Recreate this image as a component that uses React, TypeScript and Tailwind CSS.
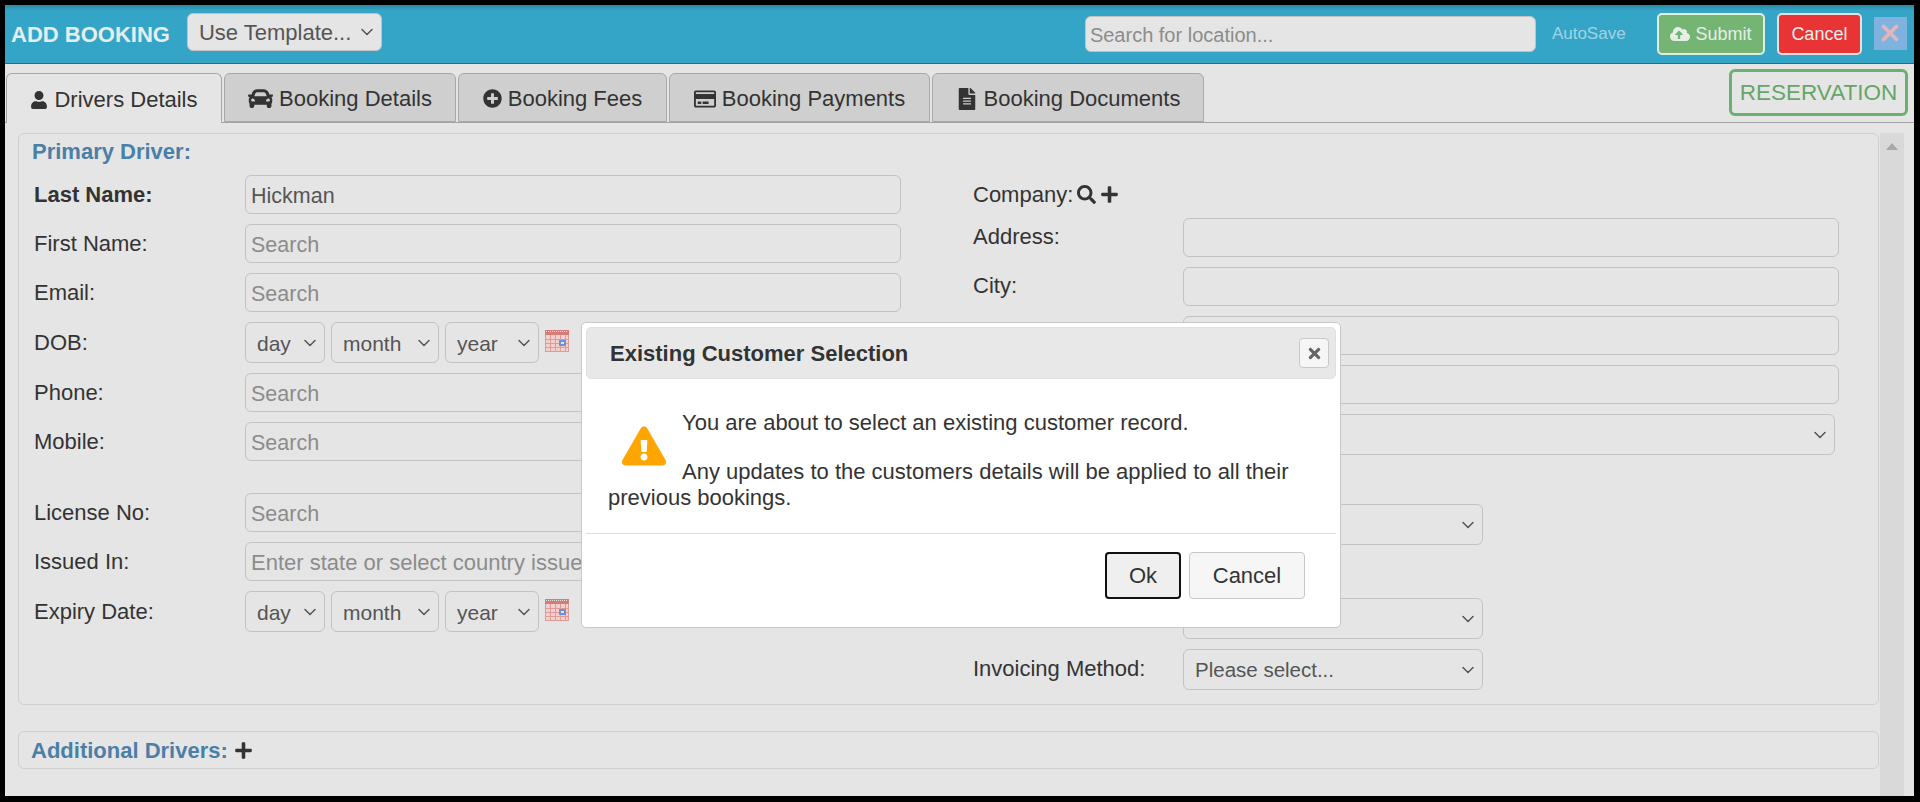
import { ReactNode } from "react";
import { ChevronDown, X } from "lucide-react";
import {
  FaCar,
  FaCloudUploadAlt,
  FaExclamationTriangle,
  FaFileAlt,
  FaPlus,
  FaPlusCircle,
  FaRegCreditCard,
  FaSearch,
  FaTimes,
  FaUser,
} from "react-icons/fa";

const tabs: { label: string; icon: ReactNode; width: string }[] = [
  { label: "Drivers Details", icon: <FaUser className="text-[18px]" />, width: "w-[216px]" },
  { label: "Booking Details", icon: <FaCar className="text-[25px]" />, width: "w-[232px]" },
  { label: "Booking Fees", icon: <FaPlusCircle className="text-[19px]" />, width: "w-[209px]" },
  { label: "Booking Payments", icon: <FaRegCreditCard className="text-[22px]" />, width: "w-[261px]" },
  { label: "Booking Documents", icon: <FaFileAlt className="text-[22px]" />, width: "w-[272px]" },
];

function CalendarIcon() {
  return (
    <svg width="24" height="22" viewBox="0 0 24 22" className="mb-[4px] ml-1.5 shrink-0">
      <rect x="0" y="0" width="24" height="22" fill="#f2d0ce" />
      <rect x="0" y="0" width="24" height="5" fill="#d67c78" />
      <path d="M1 1.5h22" stroke="#eddcdc" strokeWidth="1" strokeDasharray="1 1" />
      <path d="M0 9.5h24M0 13.5h24M0 17.5h24M5.5 5v17M10.5 5v17M15.5 5v17M20.5 5v17M.5 5v17M23.5 5v17M0 21.5h24" stroke="#dd9c98" strokeWidth="1" />
      <rect x="14" y="10" width="7" height="6" fill="#6f8fd6" />
      <rect x="16" y="12" width="3" height="2" fill="#dfe6f5" />
    </svg>
  );
}

function Label({ children, bold }: { children: ReactNode; bold?: boolean }) {
  return (
    <label className={`w-[224px] shrink-0 pb-[1px] pl-[13px] text-[22px] text-[#333] ${bold ? "font-bold" : ""}`}>
      {children}
    </label>
  );
}

function TextInput({ placeholder, value, className = "" }: { placeholder?: string; value?: string; className?: string }) {
  return (
    <input
      readOnly
      placeholder={placeholder}
      value={value ?? ""}
      className={`h-[39px] rounded-[6px] border border-[#c2c2c2] bg-transparent px-[5px] pt-[3px] text-[21.5px] text-[#555] placeholder:text-[#8c8c8c] ${className}`}
    />
  );
}

function Select({ text, className = "", textClass = "text-[21px]", wrapClass = "" }: { text: string; className?: string; textClass?: string; wrapClass?: string }) {
  return (
    <div className={`relative shrink-0 ${className}`}>
      <select
        defaultValue={text}
        className={`h-[41px] w-full appearance-none rounded-[6px] border border-[#c2c2c2] bg-transparent pt-[2px] pl-[11px] text-[#555] ${textClass} ${wrapClass}`}
      >
        <option>{text}</option>
      </select>
      <ChevronDown
        size={20}
        strokeWidth={1.8}
        className="pointer-events-none absolute top-1/2 right-[5px] -translate-y-1/2 text-[#555]"
      />
    </div>
  );
}

function DateRow({ label }: { label: string }) {
  return (
    <div className="flex items-center">
      <Label>{label}</Label>
      <div className="flex items-center gap-[6px]">
        <Select text="day" className="w-[80px]" />
        <Select text="month" className="w-[108px]" />
        <Select text="year" className="w-[94px]" />
      </div>
      <CalendarIcon />
    </div>
  );
}

function InputRow({ label, placeholder = "Search", value, bold, inputClass = "" }: { label: string; placeholder?: string; value?: string; bold?: boolean; inputClass?: string }) {
  return (
    <div className="flex items-center">
      <Label bold={bold}>{label}</Label>
      <TextInput placeholder={placeholder} value={value} className={`w-[656px] ${inputClass}`} />
    </div>
  );
}

function App() {
  return (
    <div className="h-[802px] w-[1920px] overflow-hidden bg-black pt-[5px] pr-[6px] pb-[6px] pl-[5px] font-['Liberation_Sans',Arial,sans-serif]">
      <div className="relative flex h-full flex-col bg-[#e5e5e5]">
        {/* header */}
        <div className="flex h-[59px] shrink-0 items-center border-b border-[#1f6f86] bg-gradient-to-b from-[#2a8aa8] from-0% to-[#35a5c7] to-10% pl-[6px]">
          <span className="text-[22px] font-bold text-[#e6eef2]">ADD BOOKING</span>
          <Select
            text="Use Template..."
            className="mb-[5px] ml-[17px] w-[195px]"
            textClass="text-[22px]"
            wrapClass="!h-[38px] bg-[#e5e5e5]!"
          />
          <input
            readOnly
            placeholder="Search for location..."
            className="ml-[703px] h-[36px] w-[451px] rounded-[6px] border border-[#c2c2c2] bg-[#e5e5e5] px-[4px] pt-[2px] text-[20px] placeholder:text-[#8c8c8c]"
          />
          <span className="ml-[16px] w-[105px] text-[17px] text-[#a3d3e3]">AutoSave</span>
          <button className="flex h-[42px] w-[108px] items-center justify-center gap-[5px] rounded-[5px] border-2 border-[#e1ece3] bg-[#74b574] text-[18px] text-[#e6eee6]">
            <FaCloudUploadAlt className="text-[20px]" />
            Submit
          </button>
          <button className="ml-[12px] h-[42px] w-[85px] rounded-[5px] border-2 border-[#e8e0e0] bg-[#e83434] text-[18px] text-[#eee]">
            Cancel
          </button>
          <button className="mb-[2px] ml-[12px] flex h-[33px] w-[33px] items-center justify-center overflow-hidden bg-[#7fb2de] text-[#e3b7ba]">
            <X size={26} strokeWidth={3.5} className="shrink-0" />
          </button>
        </div>

        {/* tabs */}
        <div className="relative flex h-[59px] shrink-0 items-end border-b border-[#a3a3a3] pl-[1px]">
          <div className="flex h-[49px] gap-[2px]">
            {tabs.map((tab, i) => (
              <div
                key={tab.label}
                className={`flex items-center justify-center gap-[6px] rounded-t-[6px] border border-[#a8a8a8] pt-[2px] text-[22px] text-[#333] ${tab.width} ${
                  i === 0 ? "h-[50px] border-b-0 bg-[#e5e5e5]" : "bg-[#cfcfcf]"
                }`}
              >
                {tab.icon}
                {tab.label}
              </div>
            ))}
          </div>
          <div className="absolute top-[5px] right-[6px] flex h-[47px] w-[179px] items-center justify-center rounded-[6px] border-[3px] border-[#6ab06e] text-[22.5px] text-[#66a568]">
            RESERVATION
          </div>
        </div>

        {/* scroll area */}
        <div className="flex min-h-0 flex-1">
          <div className="min-w-0 flex-1 pt-[10px] pl-[13px]">
            <div className="flex h-[572px] rounded-[6px] border border-[#cfcfcf]">
              <div className="w-[954px] shrink-0 px-[2px]">
                <div className="pt-[4px] pl-[11px] text-[22px] leading-[28px] font-bold text-[#4a7fa7]">Primary Driver:</div>
                <div className="mt-[9px] flex flex-col gap-[10px]">
                  <InputRow label="Last Name:" value="Hickman" bold />
                  <InputRow label="First Name:" />
                  <InputRow label="Email:" />
                  <DateRow label="DOB:" />
                  <InputRow label="Phone:" />
                  <InputRow label="Mobile:" />
                  <div className="mt-[22px]">
                    <InputRow label="License No:" />
                  </div>
                  <InputRow label="Issued In:" placeholder="Enter state or select country issued" inputClass="text-[22px]" />
                  <DateRow label="Expiry Date:" />
                </div>
              </div>
              <div className="flex-1 pt-[44px]">
                <div className="flex items-center gap-[4px] text-[22px] text-[#333]">
                  Company:
                  <FaSearch className="text-[19px]" />
                  <FaPlus className="text-[19px]" />
                </div>
                <div className="mt-[7px] flex flex-col gap-[10px]">
                  {["Address:", "City:", "", ""].map((label, i) => (
                    <div key={i} className="flex items-center">
                      <span className="w-[210px] shrink-0 pb-[3px] text-[22px] text-[#333]">{label}</span>
                      <TextInput className="w-[656px]" />
                    </div>
                  ))}
                  <Select text="" className="ml-[210px] w-[652px]" />
                  <Select text="" className="mt-[39px] ml-[210px] w-[300px]" />
                  <Select text="" className="mt-[43px] ml-[210px] w-[300px]" />
                  <div className="flex items-center">
                    <span className="w-[210px] shrink-0 pb-[3px] text-[22px] text-[#333]">Invoicing Method:</span>
                    <Select text="Please select..." className="w-[300px]" textClass="text-[20.5px]" />
                  </div>
                </div>
              </div>
            </div>

            <div className="mt-[26px] flex h-[38px] items-center gap-[6px] rounded-[6px] border border-[#cfcfcf] pl-[12px] text-[22px] font-bold text-[#4a7fa7]">
              Additional Drivers:
              <FaPlus className="text-[19px] text-[#333]" />
            </div>
          </div>
          <div className="mt-[10px] ml-[1px] w-[24px] shrink-0 bg-[#d9d9d9] pt-[10px]">
            <div className="mx-auto h-0 w-0 border-x-[6px] border-b-[7px] border-x-transparent border-b-[#a8a8a8]" />
          </div>
          <div className="w-[10px] shrink-0" />
        </div>

        {/* confirm dialog */}
        <div className="absolute top-[317px] left-[576px] flex h-[306px] w-[760px] flex-col rounded-[5px] border border-[#c8c8c8] bg-white p-[4px]">
          <div className="flex h-[52px] shrink-0 items-center justify-between rounded-[5px] border border-[#e0e0e0] bg-[#e8e8e8] pr-[6px] pl-[23px]">
            <span className="text-[22px] font-bold text-[#333]">Existing Customer Selection</span>
            <button className="flex h-[30px] w-[30px] items-center justify-center rounded-[4px] border border-[#c8c8c8] bg-[#f6f6f6] text-[#666]">
              <FaTimes className="text-[17px]" />
            </button>
          </div>
          <div className="h-[155px] shrink-0 border-b border-[#dcdcdc] pt-[31px] pl-[22px] text-[22px] leading-[26px] text-[#333]">
            <FaExclamationTriangle className="float-left mt-[14px] mr-[16px] ml-[14px] text-[44px] text-[#ffa500]" />
            <p>You are about to select an existing customer record.</p>
            <p className="mt-[23px]">Any updates to the customers details will be applied to all their previous bookings.</p>
          </div>
          <div className="flex justify-end gap-[8px] pt-[18px] pr-[31px]">
            <button className="h-[47px] w-[76px] rounded-[4px] border-2 border-[#111] bg-[#efefef] text-[22px] text-[#333]">Ok</button>
            <button className="h-[47px] w-[116px] rounded-[4px] border border-[#c8c8c8] bg-[#f6f6f6] text-[22px] text-[#333]">Cancel</button>
          </div>
        </div>
      </div>
    </div>
  );
}

export default App;
